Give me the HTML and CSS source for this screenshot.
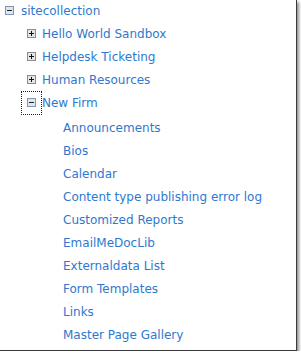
FILE: index.html
```html
<!DOCTYPE html>
<html lang="en">
<head>
  <meta charset="UTF-8" />
  <title>Site tree</title>
  <link rel="stylesheet" href="styles.css">
</head>
<body>
  <div class="frame">
    <ul class="tree">
      <li class="node lvl0">
        <span class="toggle"><svg width="9" height="9" viewBox="0 0 9 9"><rect x="0.5" y="0.5" width="8" height="8" fill="#dfe6ee" stroke="#7f97b2"/><path d="M2 4.5h5" stroke="#222" stroke-width="1"/></svg></span>
        <a href="#">sitecollection</a>
      </li>
      <li class="node lvl1">
        <span class="toggle"><svg width="9" height="9" viewBox="0 0 9 9"><rect x="0.5" y="0.5" width="8" height="8" fill="#e4e4e4" stroke="#8c8c8c"/><path d="M2 4.5h5M4.5 2v5" stroke="#111" stroke-width="1"/></svg></span>
        <a href="#">Hello World Sandbox</a>
      </li>
      <li class="node lvl1">
        <span class="toggle"><svg width="9" height="9" viewBox="0 0 9 9"><rect x="0.5" y="0.5" width="8" height="8" fill="#e4e4e4" stroke="#8c8c8c"/><path d="M2 4.5h5M4.5 2v5" stroke="#111" stroke-width="1"/></svg></span>
        <a href="#">Helpdesk Ticketing</a>
      </li>
      <li class="node lvl1">
        <span class="toggle"><svg width="9" height="9" viewBox="0 0 9 9"><rect x="0.5" y="0.5" width="8" height="8" fill="#e4e4e4" stroke="#8c8c8c"/><path d="M2 4.5h5M4.5 2v5" stroke="#111" stroke-width="1"/></svg></span>
        <a href="#">Human Resources</a>
      </li>
      <li class="node lvl1">
        <span class="toggle focused"><svg width="9" height="9" viewBox="0 0 9 9"><rect x="0.5" y="0.5" width="8" height="8" fill="#dfe6ee" stroke="#7f97b2"/><path d="M2 4.5h5" stroke="#222" stroke-width="1"/></svg></span>
        <a href="#">New Firm</a>
      </li>
      <li class="node lvl2 first"><a href="#">Announcements</a></li>
      <li class="node lvl2"><a href="#">Bios</a></li>
      <li class="node lvl2"><a href="#">Calendar</a></li>
      <li class="node lvl2"><a href="#">Content type publishing error log</a></li>
      <li class="node lvl2"><a href="#">Customized Reports</a></li>
      <li class="node lvl2"><a href="#">EmailMeDocLib</a></li>
      <li class="node lvl2"><a href="#">Externaldata List</a></li>
      <li class="node lvl2"><a href="#">Form Templates</a></li>
      <li class="node lvl2"><a href="#">Links</a></li>
      <li class="node lvl2"><a href="#">Master Page Gallery</a></li>
    </ul>
  </div>
</body>
</html>
```

FILE: styles.css
```css
body {
  margin: 0;
  background-color: #fff;
  font-family: 'DejaVu Sans', Verdana, sans-serif;
}

.frame {
  width: 296px;
  height: 350px;
  background-color: #fff;
  border-right: 1px solid #3a3a3a;
  border-bottom: 1px solid #3a3a3a;
  box-shadow: 2px 2px 3px rgba(0, 0, 0, 0.45);
  overflow: hidden;
}

.tree {
  list-style: none;
  margin: 0;
  padding: 0;
}

.node {
  display: flex;
  align-items: center;
  height: 23px;
  font-size: 12px;
}
.node:first-child {
  margin-top: -1px;
}

.node a {
  color: #2f78cf;
  text-decoration: none;
  white-space: nowrap;
}

.toggle {
  display: flex;
  width: 9px;
  height: 9px;
  margin-right: 7px;
}

.lvl0 { padding-left: 5px; }
.lvl1 { padding-left: 27px; }
.lvl1 .toggle { margin-right: 6px; }
.lvl2 { padding-left: 63px; }
.lvl2.first { margin-top: 2px; }

/* focus box round the New Firm toggle */
.toggle.focused {
  position: relative;
}
.toggle.focused::before {
  content: '';
  position: absolute;
  left: -6px;
  top: -7px;
  width: 19px;
  height: 22px;
  border: 1px dotted #222;
}
```
